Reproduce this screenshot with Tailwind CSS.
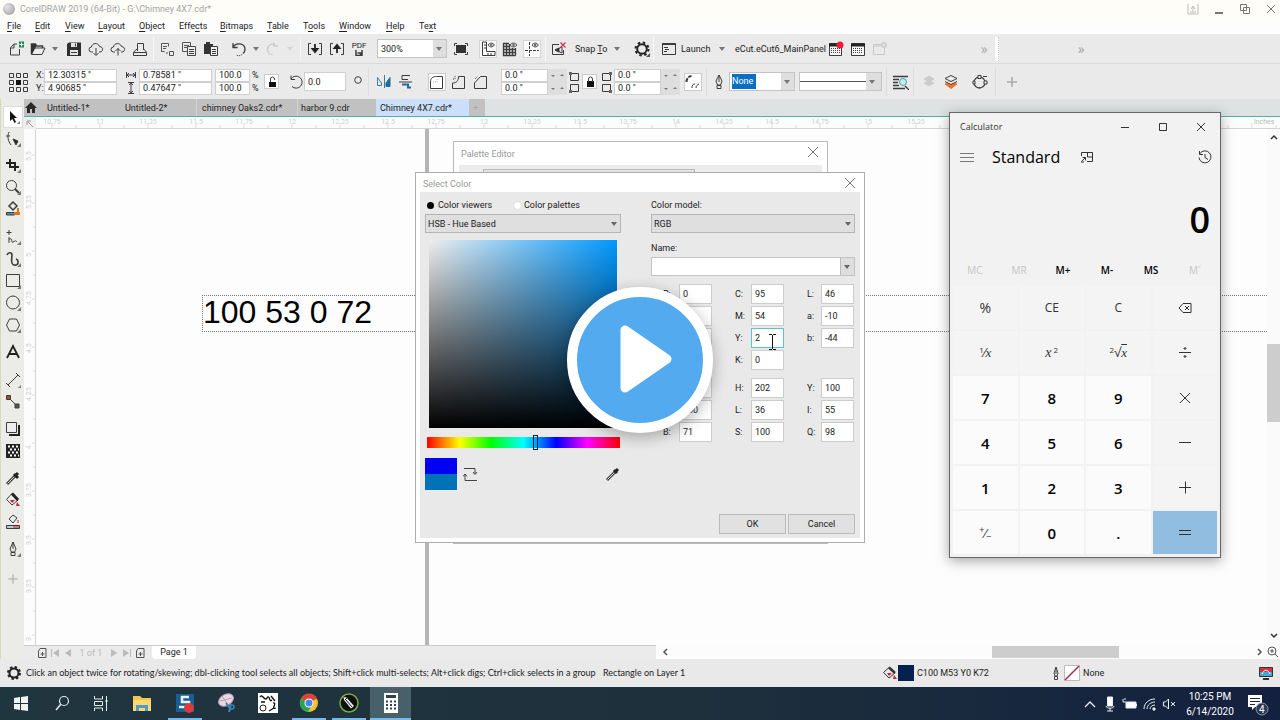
<!DOCTYPE html>
<html lang="en">

<head>
    <meta charset="UTF-8">
    <meta name="viewport" content="width=device-width, initial-scale=1.0">
    <title>CorelDRAW 2019 (64-Bit) - G:\Chimney 4X7.cdr*</title>
    <script src="https://cdn.jsdelivr.net/npm/@tailwindcss/browser@4"></script>
</head>

<body class="relative flex flex-col h-screen overflow-hidden whitespace-nowrap bg-[#e9e9e9] font-['Roboto','Noto_Sans',sans-serif] text-[9px] leading-3 text-[#222]">

    <!-- TITLE BAR -->
    <header class="flex h-[18px] items-center gap-[5px] bg-[#fefdf8] px-[3px] text-[#a3a3a3]">
        <span class="size-3 rounded-full bg-radial-[at_35%_35%] from-[#e4e4e4] to-[#989898]"></span>
        <h1 class="flex-1">CorelDRAW 2019 (64-Bit) - G:\Chimney 4X7.cdr*</h1>
        <div class="flex items-center gap-[14px] [&_svg]:size-3 [&_svg]:fill-none [&_svg]:stroke-[#777]">
            <button aria-label="Account"><svg viewBox="0 0 12 12"><path d="M1 1v10h10V1M3 9h6M6 8V4M4 6l2-3 2 3" stroke="#bbb"/></svg></button>
            <button aria-label="Minimize"><svg viewBox="0 0 12 12"><path d="M2 10h8" stroke-width="2"/></svg></button>
            <button aria-label="Restore"><svg viewBox="0 0 12 12"><path d="M1.500 1.500h6v6h-6zM4.500 4.500h6v6h-6z"/></svg></button>
            <button aria-label="Close"><svg viewBox="0 0 12 12"><path d="M2 2l8 8M10 2l-8 8"/></svg></button>
        </div>
    </header>

    <!-- MENU -->
    <nav class="flex h-4 items-center gap-[15px] bg-[#fdfdfd] px-[7px] [&_u]:underline-offset-2">
        <a href="#" class="w-[13px]"><u>F</u>ile</a>
        <a href="#" class="w-[15px]"><u>E</u>dit</a>
        <a href="#" class="w-[18px]"><u>V</u>iew</a>
        <a href="#" class="w-[26px]"><u>L</u>ayout</a>
        <a href="#" class="w-[25px]"><u>O</u>bject</a>
        <a href="#" class="w-[26px]">Effe<u>c</u>ts</a>
        <a href="#" class="w-[32px]"><u>B</u>itmaps</a>
        <a href="#" class="w-[21px]"><u>T</u>able</a>
        <a href="#" class="w-[21px]">T<u>o</u>ols</a>
        <a href="#" class="w-[32px]"><u>W</u>indow</a>
        <a href="#" class="w-[18px]"><u>H</u>elp</a>
        <a href="#">Te<u>x</u>t</a>
    </nav>

    <!-- STANDARD TOOLBAR -->
    <div class="flex h-[30px] shrink-0 items-center border-b border-[#d9d9d9] bg-[#eaeaea] pl-[5px] [&_button_svg]:mx-auto [&_svg]:shrink-0 [&_svg]:fill-none [&_svg]:stroke-[#3c3c3c] [&>*]:shrink-0 [&>button]:min-w-[22px]">
        <button aria-label="New"><svg class="size-4" viewBox="0 0 16 16"><path d="M9 3H6L2.500 6.500V14h9V8M6 3v4H3"/><path d="M11 .5h5v6h-5z" fill="#178a55" stroke="none"/><path d="M13.500 1.500v4M11.500 3.500h4" stroke="#fff"/></svg></button>
        <button aria-label="Open"><svg class="size-4" viewBox="0 0 16 16"><path d="M1.500 13V3h4l1 2h6v2" stroke-width="1.500"/><path d="M1.500 13.500L4 7h11l-3 6.500z" fill="#eee"/><path d="M1 3h5v3L2 13H1z" fill="#333" stroke="none"/></svg></button>
        <svg class="w-3 h-2" viewBox="0 0 12 8"><path d="M3 2h6L6 6z" fill="#777" stroke="none"/></svg>
        <button aria-label="Save" class="ml-0.5"><svg class="size-4" viewBox="0 0 16 16"><path d="M1 3l2-1.500h12V15H1z" fill="#2f2f2f" stroke="none"/><path d="M5 2h6v4H5zM4 9h8v5H4z" fill="#e5e5e5" stroke="none"/><path d="M9.500 2.500v3M5 11.500h6"/></svg></button>
        <button aria-label="Download from cloud"><svg class="size-4" viewBox="0 0 16 16"><path d="M5 11H3.500a2.500 2.500 0 010-5C4 2 10 1 11.500 5.500c4 0 4 5.500.5 5.500h-1M8 7v7M5.500 12L8 14.500l2.500-2.500"/></svg></button>
        <button aria-label="Upload to cloud"><svg class="size-4" viewBox="0 0 16 16"><path d="M5 11H3.500a2.500 2.500 0 010-5C4 2 10 1 11.500 5.500c4 0 4 5.500.5 5.500h-1M8 14.500v-7M5.500 10L8 7.500l2.500 2.500"/></svg></button>
        <button aria-label="Print"><svg class="size-4" viewBox="0 0 16 16"><path d="M5.500 10V2.500h6V9M1.500 11.500h13v3h-13zM1.500 11.500L4 8.500h2M11.500 8.500h1l2 3"/></svg></button>
        <span class="mx-0.5 h-6 w-px bg-[#f8f8f8]"></span>
        <button aria-label="Cut"><svg class="size-4" viewBox="0 0 16 16"><path d="M2.500 2.500h7v3M2.500 2.500v8h3M4 5.500h4M4 7.500h3M10.500 10.500h4v4h-4z" stroke="#555"/><path d="M7 12h2" stroke="#555"/></svg></button>
        <button aria-label="Copy"><svg class="size-4" viewBox="0 0 16 16"><path d="M1.500 1.500h8v9h-8zM3 4.500h5M3 6.500h3" stroke="#555"/><path d="M6.500 5.500h8v9h-8z" fill="#eee" stroke="#444"/><path d="M8 8.500h5M8 10.500h5M8 12.500h5"/></svg></button>
        <button aria-label="Paste"><svg class="size-4" viewBox="0 0 16 16"><path d="M1 3h2V1h4v2h3v10H1z" fill="#333" stroke="none"/><path d="M7.500 5.500h7v9h-7z" fill="#eee"/><path d="M9 8.500h4M9 10.500h4M9 12.500h4"/></svg></button>
        <button aria-label="Undo" class="ml-1.5"><svg class="size-4" viewBox="0 0 16 16"><path d="M2 6c3-5 12-4 12 2.500 0 1.500-1 3-2 4M2 2v4.500h4.500" stroke-width="1.300"/><path d="M11 13.500c-2 1.500-4 1.500-6 .5" stroke-dasharray="1 1"/></svg></button>
        <svg class="w-3 h-2" viewBox="0 0 12 8"><path d="M3 2h6L6 6z" fill="#777" stroke="none"/></svg>
        <button aria-label="Redo"><svg class="size-4" viewBox="0 0 16 16"><path d="M10 4C6 2 2 5 2.500 9c.5 3 3 4.500 5 4.500M9 1.500V5h4" stroke="#ccc" stroke-width="1.500"/></svg></button>
        <svg class="w-3 h-2" viewBox="0 0 12 8"><path d="M3 2h6L6 6z" fill="#d5d5d5" stroke="none"/></svg>
        <span class="ml-1 mr-[3px] h-6 w-px bg-[#f4f4f4]"></span>
        <button aria-label="Import"><svg class="size-4" viewBox="0 0 16 16"><path d="M4 2.500H1.500v11H4M12 2.500h2.500v11H12"/><path d="M8 3v7M5.500 8L8 11l2.500-3z" stroke-width="1.800" stroke="#222"/></svg></button>
        <button aria-label="Export"><svg class="size-4" viewBox="0 0 16 16"><path d="M4 2.500H1.500v11H4M12 2.500h2.500v11H12"/><path d="M8 12V5M5.500 7L8 4l2.500 3z" stroke-width="1.800" stroke="#222"/></svg></button>
        <button aria-label="Publish to PDF" class="text-[8px] leading-[8px]">PDF<svg class="w-2 h-1.5" viewBox="0 0 8 6"><path d="M1 0v5.500h6V0M2.500 3h3v2.500" stroke-width="1.500"/></svg></button>
        <div class="ml-[7px] flex h-[19px] w-[70px] border border-[#c4c4c4] bg-white">
            <select aria-label="Zoom level" class="min-w-0 flex-1 appearance-none pl-[3px]"><option>300%</option></select>
            <span class="flex w-[13px] items-center bg-[#dedede]"><svg class="w-3 h-2" viewBox="0 0 12 8"><path d="M3 2h6L6 6z" fill="#777" stroke="none"/></svg></span>
        </div>
        <button aria-label="Full screen" class="ml-[3px]"><svg class="size-4" viewBox="0 0 16 16"><path d="M3 4h10v8H3z" fill="#333" stroke="none"/><path d="M1.500 5V2.500H4M12 2.500h2.500V5M14.500 11v2.500H12M4 13.500H1.500V11"/></svg></button>
        <button aria-label="Rulers" class="ml-[5px]"><svg class="size-[18px] border border-[#d5d5d5] bg-[#fafafa]" viewBox="0 0 16 16"><path d="M2.500 1v13.500H15v-4H6.500V1zM4 4h2M4 7h2M8 12v2M11 12v2"/><path d="M8 4c2-2.500 4.500-2.500 6.500 0-2 2.500-4.500 2.500-6.500 0z"/><circle cx="11.250" cy="4" r=".8"/></svg></button>
        <button aria-label="Grid"><svg class="size-4" viewBox="0 0 16 16"><path d="M1.500 2v12.500h12M4.500 2v12.500M7.500 3v11.500M10.500 7v7.500M13.500 7v7.500M1 2.500h6M1 5.500h7M1 8.500h13M1 11.500h13" stroke-width="1.300"/><path d="M8 4c2-2.500 5-2.500 7 0-2 2.500-5 2.500-7 0z" fill="#eee"/><circle cx="11.500" cy="4" r=".8"/></svg></button>
        <button aria-label="Guidelines"><svg class="size-[18px] border border-[#d5d5d5] bg-[#fafafa]" viewBox="0 0 16 16"><path d="M5.500 1v14M1 9.500h14" stroke-dasharray="3 1"/><path d="M8 4c2-2.500 4.500-2.500 6.500 0-2 2.500-4.500 2.500-6.500 0z"/><circle cx="11.250" cy="4" r=".8"/></svg></button>
        <span class="mx-0.5 h-6 w-px bg-[#f8f8f8]"></span>
        <button aria-label="Snap off"><svg class="size-4" viewBox="0 0 16 16"><path d="M8 3.500H1.500v10h11V9M4 9l7-3v6z"/><path d="M4 9l4-2v4z" fill="#333"/><path d="M9.500 1.500l5 5M14.500 1.500l-5 5" stroke="#cf3448" stroke-width="1.200"/></svg></button>
        <button class="ml-[5px] w-9 text-left">Snap <u>T</u>o</button>
        <svg class="w-3 h-2" viewBox="0 0 12 8"><path d="M3 2h6L6 6z" fill="#777" stroke="none"/></svg>
        <button aria-label="Options" class="ml-2"><svg class="size-4" viewBox="0 0 16 16"><circle cx="8" cy="8" r="4.800" stroke-width="2" stroke="#222"/><circle cx="8" cy="8" r="6.500" stroke-width="2" stroke-dasharray="2.500 2.600" stroke="#222"/><path d="M16 12v4h-4z" fill="#555" stroke="none"/></svg></button>
        <span class="mr-1 h-6 w-px bg-[#f8f8f8]"></span>
        <button aria-label="Application launcher"><svg class="size-4" viewBox="0 0 16 16"><path d="M1.500 2.500h13v11h-13z"/><path d="M1.500 3h13" stroke-width="2"/><path d="M3 6.500h4M4 8.500h4M3 10.500h3"/></svg></button>
        <button class="ml-px w-[35px] text-left">Launch</button>
        <svg class="w-3 h-2" viewBox="0 0 12 8"><path d="M3 2h6L6 6z" fill="#777" stroke="none"/></svg>
        <button class="ml-[7px] w-[90px] text-left">eCut.eCut6_MainPanel</button>
        <button aria-label="Macro record"><svg class="size-4" viewBox="0 0 16 16"><path d="M1.500 2.500h12v12h-12z" fill="#f5f5f5"/><path d="M1 4h13" stroke-width="3" stroke="#222"/><path d="M3 7.500h10M3 9.500h10M3 11.500h10" stroke-dasharray="1 1" stroke-width="1.200"/><circle cx="12" cy="4" r="3.500" fill="#ee1c3a" stroke="none"/></svg></button>
        <button aria-label="Macro calendar"><svg class="size-4" viewBox="0 0 16 16"><path d="M1.500 2.500h13v12h-13z" fill="#f5f5f5"/><path d="M1 4h14" stroke-width="3" stroke="#222"/><path d="M3 7.500h10M3 9.500h10M3 11.500h10" stroke-dasharray="1 1" stroke-width="1.200"/></svg></button>
        <button aria-label="Macro stop"><svg class="size-4" viewBox="0 0 16 16"><path d="M9 3.500H1.500v10h11V7M1 5h8" stroke="#c8c8c8"/><circle cx="12" cy="4" r="2.500" stroke="#c8c8c8" fill="#ddd"/></svg></button>
        <button aria-label="More" class="ml-[82px] text-[15px] text-[#aaa]">»</button>
        <span class="h-6 w-1 border-r border-dotted border-[#ccc] bg-white"></span>
        <button aria-label="More tools" class="ml-[71px] text-[15px] text-[#aaa]">»</button>
    </div>

    <!-- PROPERTY BAR -->
    <div class="flex h-[35px] shrink-0 items-center bg-[#eaeaea] pl-[8px] [&_button_svg]:mx-auto [&_svg]:shrink-0 [&_svg]:fill-none [&_svg]:stroke-[#3c3c3c] [&>*]:shrink-0 [&_input]:min-w-0 [&_input]:bg-white [&_input]:px-[3px] [&_input]:h-[13px] [&_input]:border [&_input]:border-[#cfcfcf]">
        <svg class="size-5" viewBox="0 0 20 20"><path d="M1.500 1.500h4v4h-4zM8.500 1.500h4v4h-4zM15.500 1.500h4v4h-4zM1.500 8.500h4v4h-4zM15.500 8.500h4v4h-4zM1.500 15.500h4v4h-4zM8.500 15.500h4v4h-4zM15.500 15.500h4v4h-4z"/><path d="M8 8h5v5H8z" fill="#111" stroke="none"/></svg>
        <div class="ml-2 grid grid-cols-[8px_73px]">
            <label for="px">X:</label><input id="px" value='12.30315 "'>
            <label for="py">Y:</label><input id="py" value='4.90685 "'>
        </div>
        <div class="ml-[9px] grid grid-cols-[13px_73px] items-center">
            <svg class="w-2.5 h-2" viewBox="0 0 10 8"><path d="M.5 1v6M9.500 1v6M1 4h8M3 2L1 4l2 2M7 2l2 2-2 2"/></svg><input aria-label="Width" value='0.78581 "'>
            <svg class="w-2.5 h-3" viewBox="0 0 10 12"><path d="M2 .5h6M2 11.500h6M5 1v10M3 3l2-2 2 2M3 9l2 2 2-2"/></svg><input aria-label="Height" value='0.47647 "'>
        </div>
        <div class="ml-[3px] grid grid-cols-[35px_10px] gap-x-0.5">
            <input id="sx" value="100.0"><label for="sx">%</label>
            <input id="sy" value="100.0"><label for="sy">%</label>
        </div>
        <button aria-label="Lock ratio" class="ml-0.5 size-[15px] border border-[#ccc] bg-white"><svg class="size-3" viewBox="0 0 12 12"><path d="M3 6h7v5H3z" fill="#111" stroke="none"/><path d="M4.500 6V3a2 2 0 014 0v1"/></svg></button>
        <svg class="ml-[9px] size-4" viewBox="0 0 16 16"><path d="M3 5a6 6 0 111 7.500M3 1.500V5.500h4"/></svg>
        <div class="flex w-[42px]"><input aria-label="Rotation" class="h-[19px]! w-full" value="0.0"></div>
        <svg class="ml-1.5 size-3" viewBox="0 0 12 12"><circle cx="6" cy="4" r="3.300"/></svg>
        <span class="ml-1 h-7 w-px bg-[#dedede]"></span>
        <button aria-label="Mirror horizontally" class="ml-1 w-[22px]"><svg class="size-4" viewBox="0 0 16 16"><path d="M1.500 3.500v8h4V9zM8.500 1v13" stroke="#3a7ca5"/><path d="M10 9l4-5.500v9h-4z" fill="#1c6d9a" stroke="#1c6d9a"/></svg></button>
        <button aria-label="Mirror vertically" class="w-[22px]"><svg class="size-4" viewBox="0 0 16 16"><path d="M4 1.500h8M4 1.500v4h6M1 8h13"/><path d="M4 10.500h6v3h3" stroke="#1c6d9a" stroke-width="2"/></svg></button>
        <button aria-label="Round corner" class="ml-[11px] size-[18px] border border-[#ccc] bg-white"><svg class="size-4" viewBox="0 0 16 16"><path d="M1.500 14.500V8c0-4 2.500-5.500 6-5.500h6v12z"/><path d="M4 8h4V4" stroke="#bbb" stroke-dasharray="1 1"/></svg></button>
        <button aria-label="Scalloped corner" class="w-[22px] ml-0.5"><svg class="size-4" viewBox="0 0 16 16"><path d="M1.500 14.500V9c4 0 6-2 6-6.500h6v12z"/><path d="M2 5h2V2" stroke-dasharray="1 1"/></svg></button>
        <button aria-label="Chamfered corner" class="w-[22px]"><svg class="size-4" viewBox="0 0 16 16"><path d="M1.500 14.500V9l6-6.500h6v12z"/><path d="M2 5l3-3" stroke-dasharray="1 1"/></svg></button>
        <div class="ml-[9px] grid grid-cols-[47px_19px]">
            <input aria-label="Top left radius" value='0.0 "'><svg class="w-[19px] h-[13px] bg-[#dedede]" viewBox="0 0 19 13"><path d="M3 6h4L5 8zM12 7h4l-2-2z" fill="#777" stroke="none"/></svg>
            <input aria-label="Bottom left radius" value='0.0 "'><svg class="w-[19px] h-[13px] bg-[#dedede]" viewBox="0 0 19 13"><path d="M3 6h4L5 8zM12 7h4l-2-2z" fill="#777" stroke="none"/></svg>
        </div>
        <svg class="mx-px w-3 h-6" viewBox="0 0 12 24"><path d="M2.500 3.500h8v7h-8zM2.500 14.500h8v7h-8z"/><path d="M1 2h3v3H1zM1 20h3v3H1z" fill="#666" stroke="none"/></svg>
        <button aria-label="Edit corners together" class="ml-px size-[15px] border border-[#ccc] bg-white"><svg class="size-3" viewBox="0 0 12 12"><path d="M3 5h7v6H3z" fill="#111" stroke="none"/><path d="M4.500 6V3a2 2 0 014 0v3"/></svg></button>
        <svg class="ml-1 mr-px w-3 h-6" viewBox="0 0 12 24"><path d="M1.500 3.500h8v7h-8zM1.500 14.500h8v7h-8z"/><path d="M8 2h3v3H8zM8 20h3v3H8z" fill="#666" stroke="none"/></svg>
        <div class="grid grid-cols-[47px_19px]">
            <input aria-label="Top right radius" value='0.0 "'><svg class="w-[19px] h-[13px] bg-[#dedede]" viewBox="0 0 19 13"><path d="M3 6h4L5 8zM12 7h4l-2-2z" fill="#777" stroke="none"/></svg>
            <input aria-label="Bottom right radius" value='0.0 "'><svg class="w-[19px] h-[13px] bg-[#dedede]" viewBox="0 0 19 13"><path d="M3 6h4L5 8zM12 7h4l-2-2z" fill="#777" stroke="none"/></svg>
        </div>
        <button aria-label="Relative corner scaling" class="ml-1 size-[18px] border border-[#ccc] bg-white"><svg class="size-4" viewBox="0 0 16 16"><path d="M1.500 8c0-3 2-6 5-6" stroke-width="2" stroke-dasharray="4 1"/><path d="M7 14c0-3 1-4 3-4M11 14c0-2 1-3 3-4"/></svg></button>
        <span class="ml-1 h-7 w-px bg-[#dedede]"></span>
        <svg class="ml-1 mr-0.5 size-4" viewBox="0 0 16 16"><path d="M8 1v7M8 1L5 7l1.500 4h3L11 7zM6 11.500h4v3H6z"/></svg>
        <div class="flex h-[19px] w-[66px] items-center border border-[#c4c4c4] bg-white">
            <div class="flex-1 pl-0.5"><select aria-label="Outline width" class="h-[15px] w-6 appearance-none bg-[#0a6fc2] leading-[15px] text-white"><option>None</option></select></div>
            <span class="flex h-full w-[13px] items-center bg-[#dedede]"><svg class="w-3 h-2" viewBox="0 0 12 8"><path d="M3 2h6L6 6z" fill="#777" stroke="none"/></svg></span>
        </div>
        <div class="ml-1 flex h-[19px] w-[83px] items-center border border-[#c4c4c4] bg-white">
            <button aria-label="Line style" class="h-px flex-1 bg-[#555]"></button>
            <span class="flex h-full w-[15px] items-center bg-[#dedede]"><svg class="w-3 h-2" viewBox="0 0 12 8"><path d="M3 2h6L6 6z" fill="#777" stroke="none"/></svg></span>
        </div>
        <span class="ml-1 h-7 w-px bg-[#dcdcdc]"></span>
        <button aria-label="Wrap text" class="ml-1 w-[20px]"><svg class="size-4" viewBox="0 0 16 16"><path d="M0 2.500h15M0 5.500h6M0 8.500h5M0 11.500h6M0 14.500h12M12 12l4 4" stroke-width="1.400"/><circle cx="10" cy="8" r="3.500" fill="#c8ecec" stroke="#42a5a5"/></svg></button>
        <span class="ml-0.5 h-7 w-px bg-[#dcdcdc]"></span>
        <button aria-label="To front" class="ml-1 w-[22px]"><svg class="size-4" viewBox="0 0 16 16"><path d="M3 5l5-3 5 3-5 3zM3 9l5 3 5-3-5-2z" fill="#ccc" stroke="#ccc"/></svg></button>
        <button aria-label="To back" class="w-[22px]"><svg class="size-4" viewBox="0 0 16 16"><path d="M2 10l6 4.500 6-4.500-6-3z" fill="#ee7722" stroke="#ee7722"/><path d="M2 4.500L8 1.500l6 3-6 3zM2 7.500l6 3 6-3" fill="#eee"/></svg></button>
        <button aria-label="Convert to curves" class="ml-1.5 w-[23px]"><svg class="size-4" viewBox="0 0 16 16"><circle cx="7.500" cy="8.500" r="5.500" stroke-width="1.300"/><path d="M6 1.500h3v3H6zM12 7h3v3h-3zM1 7h2v3H1zM11 2.500h4" fill="#eee"/></svg></button>
        <span class="ml-1 h-7 w-px bg-[#dcdcdc]"></span>
        <button aria-label="Customize" class="ml-2.5 w-3"><svg class="size-3" viewBox="0 0 12 12"><path d="M6 1v10M1 6h10" stroke="#aaa" stroke-width="1.500"/></svg></button>
    </div>

    <!-- WORKSPACE -->
    <main class="flex min-h-0 flex-1">

        <!-- TOOLBOX -->
        <div class="flex w-6 shrink-0 flex-col items-center border-l border-[#d9d9b8] bg-[#ebebe8] pt-[7px] [&_svg]:mx-auto [&_svg]:size-4 [&_svg]:fill-none [&_svg]:stroke-[#3c3c3c] [&>button]:h-[22px] [&>button]:w-5 [&>button]:shrink-0">
            <button aria-label="Pick" class="border border-[#ddd] bg-white"><svg viewBox="0 0 16 16"><path d="M5 2v10l2.500-2 2 4 1.500-1-2-4h3z" fill="#111" stroke="none"/><path d="M15 12v3h-3z" fill="#777" stroke="none"/></svg></button>
            <button aria-label="Shape"><svg viewBox="0 0 16 16"><path d="M4 1C2 5 3 10 6 14M1 5h4"/><path d="M8 8l5 2-2 4z" fill="#222"/><path d="M16 12v4h-4z" fill="#777" stroke="none"/></svg></button>
            <button aria-label="Crop" class="mt-1"><svg viewBox="0 0 16 16"><path d="M5 2v8h9M1 6h9v8" stroke-width="2" stroke="#222"/><path d="M16 12v4h-4z" fill="#777" stroke="none"/></svg></button>
            <button aria-label="Zoom"><svg viewBox="0 0 16 16"><circle cx="6.500" cy="6.500" r="5"/><path d="M10 10l4 4" stroke-width="2"/><path d="M16 12v4h-4z" fill="#777" stroke="none"/></svg></button>
            <button aria-label="Smart fill"><svg viewBox="0 0 16 16"><path d="M8 1l4 4-4 4-4-4z" stroke-width="1.500"/><path d="M1.500 11.500h8V14h-8z" fill="#5590b5"/><path d="M9 11h6v3H9zM12 7h2v4h-2z" fill="#d9741f" stroke="none"/></svg></button>
            <button aria-label="Freehand" class="mt-1.5"><svg viewBox="0 0 16 16"><path d="M4 1v5M1.500 3.500h5M4 8v6M4 10c5-1 1 4 4 3s2-2 4 0"/><path d="M16 12v4h-4z" fill="#777" stroke="none"/></svg></button>
            <button aria-label="Artistic media"><svg viewBox="0 0 16 16"><path d="M2 4c1-3 5-3 5 0 0 4-2 9 2 10 5 1 5-5 2-6" stroke-width="1.600"/><path d="M16 12v4h-4z" fill="#777" stroke="none"/></svg></button>
            <button aria-label="Rectangle"><svg viewBox="0 0 16 16"><path d="M1.500 1.500h13v12h-13z"/><path d="M16 12v4h-4z" fill="#777" stroke="none"/></svg></button>
            <button aria-label="Ellipse"><svg viewBox="0 0 16 16"><circle cx="8" cy="7.500" r="6.500"/><path d="M16 12v4h-4z" fill="#777" stroke="none"/></svg></button>
            <button aria-label="Polygon"><svg viewBox="0 0 16 16"><path d="M4.500 2h7l3 6-3 6h-7l-3-6z"/><path d="M16 12v4h-4z" fill="#777" stroke="none"/></svg></button>
            <button aria-label="Text" class="mt-[5px]"><svg viewBox="0 0 16 16"><path d="M2 14L8 2l6 12M4 10h8" stroke-width="1.800" stroke="#222"/></svg></button>
            <button aria-label="Dimension" class="mt-1.5"><svg viewBox="0 0 16 16"><path d="M3 13L13 3M1 11l4 4M11 1l4 4"/><path d="M16 13v3h-3z" fill="#777" stroke="none"/></svg></button>
            <button aria-label="Connector"><svg viewBox="0 0 16 16"><path d="M3 3l9 9"/><path d="M1.500 1.500h4v4h-4z" fill="#a54a33"/><path d="M10 10h4v4h-4z" fill="#555"/></svg></button>
            <button aria-label="Drop shadow" class="mt-[5px]"><svg viewBox="0 0 16 16"><path d="M4 14h10V4" stroke="#222" stroke-width="2"/><path d="M1.500 1.500h10v10h-10z" fill="#eee"/></svg></button>
            <button aria-label="Transparency"><svg viewBox="0 0 16 16"><path d="M1 1h14v14H1z" fill="#222" stroke="none"/><path d="M3 3.500h11M5 6.500h9M3 9.500h11M5 12.500h9" stroke="#fff" stroke-width="2" stroke-dasharray="2 2"/></svg></button>
            <button aria-label="Color eyedropper" class="mt-[5px]"><svg viewBox="0 0 16 16"><path d="M2 14l8-8" stroke-width="3"/><path d="M2.500 13.500l7-7" stroke="#ddd"/><path d="M9 4l4 4M10 6l3-3" stroke-width="3" stroke="#222"/></svg></button>
            <button aria-label="Interactive fill"><svg viewBox="0 0 16 16"><path d="M7 1.500L13 8l-6 5-5.500-5.500z"/><path d="M7 1.500L13 8" stroke-width="3" stroke="#222"/><path d="M5 8h5l-3 3zM12 10l3 4h-4z" fill="#c62344" stroke="none"/></svg></button>
            <button aria-label="Smart drawing"><svg viewBox="0 0 16 16"><path d="M8 1l4 3-4 5-4-4z"/><path d="M13 6v3" stroke="#c62344"/><path d="M1.500 11.500h13v3h-13z" fill="#c77"/><path d="M2 12h6v2H2z" fill="#b9c9d4" stroke="none"/></svg></button>
            <button aria-label="Outline pen" class="mt-[5px]"><svg viewBox="0 0 16 16"><path d="M8 1v7M8 1L5 8l1.500 3h3L11 8zM6 11.500h4v3H6z"/><path d="M16 12v4h-4z" fill="#777" stroke="none"/></svg></button>
            <button aria-label="Customize toolbox" class="mt-2"><svg viewBox="0 0 16 16"><path d="M8 3.500v9M3.500 8h9" stroke="#bbb" stroke-width="1.500"/></svg></button>
        </div>

        <div class="flex min-w-0 flex-1 flex-col">
            <!-- DOCUMENT TABS -->
            <div class="flex h-[18px] shrink-0 items-center border-b border-[#4db3a8] bg-[#dfe2e2] [&>a]:h-full [&>a]:bg-[#c1c1c1] [&>a]:pt-[3px]">
                <a href="#" aria-label="Welcome" class="w-5 pl-px"><svg class="size-3" viewBox="0 0 12 12"><path d="M6 0L0 6h2v5h3V7h2v4h3V6h2z" fill="#2a2a2a"/></svg></a>
                <a href="#" class="w-[76px] pl-[3px]">Untitled-1*</a>
                <a href="#" class="w-[77px] border-r border-[#d3d3d3] pl-[5px]">Untitled-2*</a>
                <a href="#" class="w-[101px] border-r border-[#d3d3d3] pl-[5px]">chimney Oaks2.cdr*</a>
                <a href="#" class="w-[78px] pl-[3px]">harbor 9.cdr</a>
                <a href="#" class="w-[93px] bg-[#cbdffa]! pl-1">Chimney 4X7.cdr*</a>
                <a href="#" aria-label="New tab" class="w-[16px] pl-1 text-[#aaa]">+</a>
            </div>

            <!-- HORIZONTAL RULER -->
            <div class="flex h-3 shrink-0 border-b border-[#d4d4d4] bg-[#fcfcfc]">
                <svg class="w-3 h-3 bg-[#eee]" viewBox="0 0 12 12"><path d="M3 8V4h4M4 5l5 5" fill="none" stroke="#999"/></svg>
                <svg id="hruler" class="h-full min-w-0 flex-1" aria-hidden="true"></svg>
            </div>

            <div class="flex min-h-0 flex-1">
                <svg id="vruler" class="w-3 h-full shrink-0 border-r border-[#d4d4d4] bg-[#fcfcfc]" aria-hidden="true"></svg>

                <!-- CANVAS -->
                <div class="relative min-w-0 flex-1 overflow-hidden bg-[#fdfdfd]">
                    <div class="absolute inset-y-0 left-[389px] w-1 bg-[#b5b5b5]"></div>
                    <div class="absolute left-[166px] right-0 top-[166px] flex h-[37px] items-center border border-r-0 border-dotted border-[#777] pb-1 font-['Liberation_Sans',sans-serif] text-[32px] leading-8 text-black">100 53 0 72</div>
                </div>
                <div class="flex w-[13px] shrink-0 flex-col items-center bg-[#fafafa] py-[5px]">
                    <svg class="size-2" viewBox="0 0 8 8"><path d="M1 5l3-3 3 3" fill="none" stroke="#333" stroke-width="1.500"/></svg>
                    <div class="mt-[202px] mb-auto h-[78px] w-full bg-[#cdcdcd]"></div>
                    <svg class="size-2" viewBox="0 0 8 8"><path d="M1 2l3 3 3-3" fill="none" stroke="#333" stroke-width="1.500"/></svg>
                </div>
            </div>

            <!-- PAGE NAVIGATOR -->
            <div class="flex h-[14px] shrink-0 items-center bg-[#fcfcfc] [&_svg]:fill-none [&_svg]:stroke-[#555]">
                <div class="flex h-full w-[632px] items-center gap-[3px] border-t border-[#ccc] bg-[#ebebeb] pl-3 text-[#bbb]">
                    <button aria-label="Add page before" class="ml-px"><svg class="size-2.5" viewBox="0 0 10 10"><path d="M3 .5h6v9H1.500V3zM3.500 6h4M5.500 4v4"/></svg></button>
                    <button aria-label="First page"><svg class="size-2.5" viewBox="0 0 10 10"><path d="M1 1v8h1V1zM9 1v8L3 5z" fill="#bbb" stroke="none"/></svg></button>
                    <button aria-label="Previous page"><svg class="size-2.5" viewBox="0 0 10 10"><path d="M8 1v8L2 5z" fill="#bbb" stroke="none"/></svg></button>
                    <span class="w-[30px] text-center">1 of 1</span>
                    <button aria-label="Next page"><svg class="size-2.5" viewBox="0 0 10 10"><path d="M2 1v8l6-4z" fill="#bbb" stroke="none"/></svg></button>
                    <button aria-label="Last page"><svg class="size-2.5" viewBox="0 0 10 10"><path d="M1 1v8l6-4zM8 1v8h1V1z" fill="#bbb" stroke="none"/></svg></button>
                    <button aria-label="Add page after"><svg class="size-2.5" viewBox="0 0 10 10"><path d="M3 .5h6v9H1.500V3zM3.500 6h4M5.500 4v4"/></svg></button>
                    <a href="#" class="ml-1 h-full w-11 rounded-b-sm bg-white text-center leading-[13px] text-[#222]">Page 1</a>
                </div>
                <svg class="ml-1.5 size-2" viewBox="0 0 8 8"><path d="M5 1L2 4l3 3" stroke-width="1.500"/></svg>
                <div class="ml-auto h-3 w-[127px] bg-[#cdcdcd]"></div>
                <svg class="ml-[136px] mr-1 size-2" viewBox="0 0 8 8"><path d="M3 1l3 3-3 3" stroke-width="1.500"/></svg>
                <svg class="mr-px size-3" viewBox="0 0 12 12"><circle cx="5" cy="5" r="4"/><path d="M8 8l3 3M3 5h4M5 3v4"/></svg>
            </div>
        </div>
    </main>

    <!-- STATUS BAR -->
    <footer class="flex h-7 shrink-0 items-center bg-[#e9e9e9] pl-1.5 pr-1.5">
        <svg class="size-4" viewBox="0 0 16 16" fill="none" stroke="#222"><circle cx="8" cy="8" r="4.500" stroke-width="2"/><circle cx="8" cy="8" r="6" stroke-width="2" stroke-dasharray="2.400 2.300"/></svg>
        <p class="ml-1 w-[577px] font-['Lato','Noto_Sans',sans-serif]">Click an object twice for rotating/skewing; dbl-clicking tool selects all objects; Shift+click multi-selects; Alt+click digs; Ctrl+click selects in a group</p>
        <p class="w-[279px] font-['Lato','Noto_Sans',sans-serif]">Rectangle on Layer 1</p>
        <svg class="size-4 shrink-0" viewBox="0 0 16 16" fill="none" stroke="#333"><path d="M7 2.500L13 8l-6 5-5.500-5.500z"/><path d="M7 2.500L13 8" stroke-width="2.500"/><path d="M5 8h5l-3 3zM12 10l3 4h-4z" fill="#c62344" stroke="none"/></svg>
        <span class="size-4 bg-[#06214d]"></span>
        <p class="ml-[3px] w-[131px]">C100 M53 Y0 K72</p>
        <svg class="size-4 shrink-0" viewBox="0 0 16 16" fill="none" stroke="#444"><path d="M8 2v7M8 2L6 8l1 3h2l1-3zM6.500 11.500h3v3h-3z"/></svg>
        <svg class="size-4 shrink-0" viewBox="0 0 16 16"><path d="M.5.5h15v15H.5z" fill="#fff" stroke="#bbb"/><path d="M1 15L15 1" stroke="#b3233f" stroke-width="1.500"/></svg>
        <p class="ml-[3px]">None</p>
        <svg class="ml-auto size-4" viewBox="0 0 16 16"><path d="M1.500 2.500h13v9h-13z" fill="#3fa9dc" stroke="#333"/><path d="M2 3h12v4H2z" fill="#d8303a"/><path d="M4 9c2-5 6-5 8 0" fill="none" stroke="#fff"/><path d="M5 14h6" stroke="#333" stroke-width="2"/></svg>
    </footer>

    <!-- TASKBAR -->
    <div class="flex h-[33px] shrink-0 items-center bg-linear-to-r from-[#20363f] via-[#1d303c] via-55% to-[#14203f] text-white [&>button]:h-full [&>button]:w-[41px] [&>button]:border-b-2 [&>button]:border-transparent [&>button>svg]:mx-auto [&>button>svg]:size-5">
        <button aria-label="Start"><svg viewBox="0 0 20 20"><path d="M3 5l6-1v6H3zM10 4l7-1v7h-7zM3 11h6v6l-6-1zM10 11h7v7l-7-1z" fill="#eef4f4"/></svg></button>
        <button aria-label="Search"><svg viewBox="0 0 20 20"><circle cx="12" cy="8" r="4.500" fill="none" stroke="#e6ecec" stroke-width="1.200"/><path d="M9 11l-5 6" stroke="#e6ecec" stroke-width="1.500"/></svg></button>
        <button aria-label="Task view" class="w-[38px]!"><svg viewBox="0 0 20 20" fill="none" stroke="#e6ecec"><path d="M3.500 3v3h8V3M3.500 8.500h8v4h-8zM3.500 18v-3h8v3M15.500 3v15M14 8h3"/></svg></button>
        <button aria-label="File Explorer" class="w-[44px]!"><svg viewBox="0 0 20 20"><path d="M1 3h7l2 2h9v13H1z" fill="#f5c64b"/><path d="M1 7h18v11H1z" fill="#fbd96f"/><path d="M4 18v-6h12v6h-3v-3H7v3z" fill="#4e9bd4"/></svg></button>
        <button aria-label="Recorder" class="mx-1 w-[34px]! border-[#76b9ed]!"><svg viewBox="0 0 20 20"><path d="M1 1h18v18H1z" fill="#176091"/><path d="M14 4H7v5h7v5H4" fill="none" stroke="#e8f2f8" stroke-width="2.500"/><circle cx="14" cy="15" r="5" fill="#dd3b3b"/></svg></button>
        <button aria-label="Snipping Tool"><svg viewBox="0 0 20 20"><ellipse cx="9" cy="7" rx="8" ry="5.500" fill="#ead9e4" stroke="#b39cb0" transform="rotate(-30 9 7)"/><path d="M5 3l6 9M3 8l12-3" stroke="#c398a8"/><path d="M9 10l5 7M14 11l-2 8" stroke="#3a83b9" stroke-width="2"/><circle cx="15" cy="14" r="2" fill="none" stroke="#3a83b9" stroke-width="1.500"/></svg></button>
        <button aria-label="Drawing app"><svg viewBox="0 0 20 20"><path d="M0 0h20v20H0z" fill="#fff"/><path d="M2 4c3-4 4 5 7 1s2 5 5 2M13 3l4 5M15 10c5-1-3 7 3 5M11 18l5-3M3 9h4" fill="none" stroke="#111" stroke-width="1.300"/><circle cx="5" cy="15" r="3" fill="none" stroke="#222"/></svg></button>
        <button aria-label="Chrome" class="mx-1 w-[34px]! border-[#76b9ed]!"><svg viewBox="0 0 20 20"><circle cx="10" cy="10" r="9" fill="#f2c230"/><path d="M10 10L2 5.500a9 9 0 0116 0z" fill="#db4437"/><path d="M10 10L2 5.500A9 9 0 009 19l4-7z" fill="#2ea353"/><circle cx="10" cy="10" r="4.500" fill="#fff"/><circle cx="10" cy="10" r="3.500" fill="#4285f4"/></svg></button>
        <button aria-label="CorelDRAW" class="ml-0.5 mr-1 w-[34px]! border-[#76b9ed]!"><svg viewBox="0 0 20 20"><circle cx="10" cy="10" r="9" fill="#0d120d" stroke="#79a83c" stroke-width="1.500"/><path d="M4.500 4l3 .5 7.500 8.500-3 2.500-7-8.500z" fill="#eee"/><path d="M6 7l2-2M7 7l6 7" stroke="#222"/></svg></button>
        <button aria-label="Calculator" class="border-[#76b9ed]! bg-[#47606a]"><svg viewBox="0 0 20 20"><path d="M3 0h14v20H3z" fill="#fff"/><path d="M5 2h10v3H5z" fill="#31434d"/><path d="M5 8.500h11M5 12h11M5 15.500h11" stroke="#31434d" stroke-width="2" stroke-dasharray="2 2"/></svg></button>
        <div class="ml-auto flex items-center gap-1 pr-[10px] [&_svg]:fill-none [&_svg]:stroke-[#e8eef2]">
            <svg class="size-4" viewBox="0 0 16 16"><path d="M3 11l5-5 5 5" stroke-width="1.300"/></svg>
            <svg class="size-4" viewBox="0 0 16 16"><path d="M5.500 1h5v9h-5z" fill="#fff"/><path d="M4 10c0 3 8 3 8 0M8 12v3M5 15h6"/></svg>
            <svg class="size-4" viewBox="0 0 16 16"><path d="M4 6h10v6H4z" fill="#fff"/><path d="M1 3v3h3M3 2v2M14.500 8v2"/></svg>
            <svg class="size-4" viewBox="0 0 16 16"><path d="M2 13C2 7 7 3 13 3M5 13c0-4 4-7 8-7M8 13c0-2 2-4 5-4"/><circle cx="12" cy="13" r="1.200" fill="#fff"/></svg>
            <svg class="size-4" viewBox="0 0 16 16"><path d="M1.500 6v4h2l3 3V3l-3 3zM9 6l4 4M13 6l-4 4"/></svg>
            <time class="ml-1 mr-1 w-12 text-center text-[10px] leading-[15px]">10:25 PM<br>6/14/2020</time>
            <svg class="ml-1 w-6 h-6" viewBox="0 0 24 24"><path d="M2 3h14v12H9l-3 3v-3H2z" fill="#fff" stroke="none"/><path d="M4 6.500h10M4 9.500h10M4 12.500h5" stroke="#1b2a45"/><circle cx="16" cy="17" r="6" fill="#2b3955" stroke="#8793a5"/><text x="13" y="21" font-size="10" fill="#fff" stroke="none">4</text></svg>
        </div>
    </div>

    <!-- PALETTE EDITOR (behind) -->
    <section class="absolute left-[453px] top-[141px] h-[403px] w-[375px] border border-[#bbb] bg-white px-[5px]">
        <div class="flex h-[23px] items-center justify-between pl-0.5 text-[#999]">
            <h2>Palette Editor</h2>
            <button aria-label="Close palette editor" class="mr-[3px] mb-1"><svg class="size-3" viewBox="0 0 12 12" fill="none" stroke="#777"><path d="M1 1l10 10M11 1L1 11"/></svg></button>
        </div>
        <div class="h-[373px] bg-[#ececec] pl-6 pt-1"><div class="h-5 w-[212px] border border-[#bbb] bg-[#e2e2e2]"></div></div>
    </section>

    <!-- SELECT COLOR -->
    <section class="absolute left-[415px] top-[172px] w-[450px] border border-[#adadad] bg-white px-1 pb-1">
        <div class="flex h-[19px] items-center justify-between pl-[3px] pr-1 text-[#999]">
            <h2 class="pt-0.5">Select Color</h2>
            <button aria-label="Close"><svg class="size-3" viewBox="0 0 12 12" fill="none" stroke="#777"><path d="M1 1l10 10M11 1L1 11"/></svg></button>
        </div>
        <div class="flex h-[346px] justify-between bg-[#e9e9e9] pl-[5px] pr-[5px] pt-[7px]">
            <div class="w-[196px]">
                <div class="flex h-3 items-center">
                    <label class="flex w-[86px] items-center gap-0.5"><input type="radio" name="view" checked class="mx-0.5 size-[7px] appearance-none rounded-full bg-white checked:bg-black">Color viewers</label>
                    <label class="flex items-center"><input type="radio" name="view" class="mx-0.5 size-[9px] appearance-none rounded-full border border-[#ddd] bg-white checked:bg-black">Color palettes</label>
                </div>
                <div class="mt-[3px] flex h-[19px] items-center border border-[#b5b5b5] bg-[#dfdfdf]">
                    <select aria-label="Color viewer" class="flex-1 appearance-none pl-0.5"><option>HSB - Hue Based</option></select>
                    <svg class="w-3 h-2" viewBox="0 0 12 8"><path d="M3 2h6L6 6z" fill="#666"/></svg>
                </div>
                <div class="ml-1 mt-[7px] h-[188px] w-[188px] bg-[#0098ff]">
                    <div class="size-full bg-linear-to-r from-[#eee] to-transparent">
                        <div class="size-full bg-linear-to-b from-transparent to-black"></div>
                    </div>
                </div>
                <div class="ml-0.5 mt-[9px] h-[11px] w-[193px] bg-[linear-gradient(90deg,#f00,#ff0_17%,#0f0_33%,#0ff_50%,#00f_67%,#f0f_83%,#f00)]">
                    <div class="relative left-[106px] -top-0.5 h-[15px] w-[5px] border border-[#123]"></div>
                </div>
                <div class="mt-2.5 flex items-center">
                    <div class="w-8 [&>div]:h-4"><div class="bg-[#0000f5]"></div><div class="bg-[#0272b6]"></div></div>
                    <button aria-label="Swap colors" class="ml-1.5"><svg class="size-4" viewBox="0 0 16 16" fill="none" stroke="#444"><path d="M1 2.500h11V8M10 6l2 2.500L14 6M14 14.500H2V8M0 10.500L2 8l2 2.500"/></svg></button>
                    <button aria-label="Pick color" class="ml-auto"><svg class="size-4" viewBox="0 0 16 16" fill="none" stroke="#444"><path d="M2 14l8-8" stroke-width="3"/><path d="M2.500 13.500l7-7" stroke="#ddd"/><path d="M9 4l3 3M10 6l3-3" stroke-width="3" stroke="#222"/></svg></button>
                </div>
            </div>

            <div class="flex w-[204px] flex-col">
                <label for="model">Color model:</label>
                <div class="mt-[3px] flex h-[19px] items-center border border-[#b5b5b5] bg-[#dfdfdf]">
                    <select id="model" class="flex-1 appearance-none pl-0.5"><option>RGB</option></select>
                    <svg class="w-3 h-2" viewBox="0 0 12 8"><path d="M3 2h6L6 6z" fill="#666"/></svg>
                </div>
                <label for="cname" class="mt-[9px]">Name:</label>
                <div class="mt-[3px] flex h-[19px] items-center border border-[#c2c2c2] bg-white">
                    <input id="cname" class="h-full min-w-0 flex-1 px-1">
                    <span class="flex h-full w-[14px] items-center border-l border-[#bbb] bg-[#dedede]"><svg class="w-3 h-2" viewBox="0 0 12 8"><path d="M3 2h6L6 6z" fill="#666"/></svg></span>
                </div>
                <div class="mt-2 grid grid-cols-[16px_56px_16px_56px_14px_33px] items-center justify-end gap-y-0.5 pr-px [&_input]:h-5 [&_input]:w-[33px] [&_input]:border [&_input]:border-[#ccc] [&_input]:bg-white [&_input]:px-[3px]">
                    <label for="r">R:</label><input id="r" value="0"><label for="c">C:</label><input id="c" value="95"><label for="l">L:</label><input id="l" value="46">
                    <label for="g">G:</label><input id="g"><label for="m">M:</label><input id="m" value="54"><label for="a">a:</label><input id="a" value="-10">
                    <label for="b">B:</label><input id="b"><label for="y">Y:</label><input id="y" class="border-[#5cc4c4]!" value="2"><label for="lb">b:</label><input id="lb" value="-44">
                    <label for="k" class="col-start-3">K:</label><input id="k" value="0">
                </div>
                <div class="mt-2 grid grid-cols-[16px_56px_16px_56px_14px_33px] items-center justify-end gap-y-0.5 pr-px [&_input]:h-5 [&_input]:w-[33px] [&_input]:border [&_input]:border-[#ccc] [&_input]:bg-white [&_input]:px-[3px]">
                    <label for="h">H:</label><input id="h"><label for="hh">H:</label><input id="hh" value="202"><label for="yy">Y:</label><input id="yy" value="100">
                    <label for="s">S:</label><input id="s" value="100"><label for="ll">L:</label><input id="ll" value="36"><label for="i">I:</label><input id="i" value="55">
                    <label for="bb">B:</label><input id="bb" value="71"><label for="ss">S:</label><input id="ss" value="100"><label for="q">Q:</label><input id="q" value="98">
                </div>
                <div class="mt-auto mb-1 flex justify-end gap-0.5 [&>button]:h-5 [&>button]:w-[67px] [&>button]:border [&>button]:border-[#bcbcbc] [&>button]:bg-[#e1e1e1]">
                    <button>OK</button>
                    <button>Cancel</button>
                </div>
            </div>
        </div>
    </section>

    <!-- TEXT CURSOR -->
    <svg class="absolute left-[768px] top-[334px] h-4 w-[9px]" viewBox="0 0 9 16" fill="none" stroke="#111"><path d="M1 .5h3M5 .5h3M4.500 1v14M1 15.500h3M5 15.500h3"/></svg>

    <!-- CALCULATOR -->
    <section class="absolute left-[949px] top-[112px] w-[272px] border border-[#666] bg-[#f2f2f2] pb-[3px] font-['Open_Sans','Noto_Sans',sans-serif] text-black shadow-[0_3px_12px_rgba(0,0,0,0.35)]">
        <div class="flex h-7 items-center pl-2.5 pr-3.5 text-[#333] [&_svg]:size-2.5 [&_svg]:fill-none [&_svg]:stroke-[#333]">
            <h2 class="flex-1">Calculator</h2>
            <div class="flex gap-7">
                <button aria-label="Minimize calculator"><svg viewBox="0 0 10 10"><path d="M1 5.500h8"/></svg></button>
                <button aria-label="Maximize calculator"><svg viewBox="0 0 10 10"><path d="M1.500 1.500h7v7h-7z"/></svg></button>
                <button aria-label="Close calculator"><svg viewBox="0 0 10 10"><path d="M1 1l8 8M9 1L1 9"/></svg></button>
            </div>
        </div>
        <div class="flex h-8 items-center pl-2.5 pr-2 [&_svg]:size-3.5 [&_svg]:fill-none [&_svg]:stroke-[#333]">
            <button aria-label="Menu"><svg viewBox="0 0 14 14"><path d="M0 3.500h14M0 7.500h14M0 11.500h14" stroke="#777"/></svg></button>
            <h3 class="ml-[18px] w-[88px] text-base">Standard</h3>
            <button aria-label="Keep on top"><svg viewBox="0 0 14 14"><path d="M1.500 6V2.500h11v9H7M7.500 3v4h5M1.500 11.500l4-4M2.500 7.500h3v3M1 12h3"/></svg></button>
            <button aria-label="History" class="ml-auto"><svg viewBox="0 0 14 14"><path d="M2 3.500a6 6 0 11-1 4M1.500 1v3.500H5M7 4v3.500l3 2"/></svg></button>
        </div>
        <output class="block h-[83px] pr-2.5 pt-[27px] text-right text-[36px] leading-10 font-semibold">0</output>
        <div class="grid h-7 grid-cols-6 px-[3px] text-[10px] font-semibold [&>button:disabled]:font-normal [&>button:disabled]:text-[#c5c5c5]">
            <button disabled>MC</button><button disabled>MR</button><button>M+</button><button>M-</button><button>MS</button><button disabled>M˅</button>
        </div>
        <div class="grid auto-rows-[43px] grid-cols-4 gap-[2px] px-[3px] pt-0.5 text-[15px] [&>button]:bg-[#f4f4f4] [&_svg]:mx-auto [&_svg]:size-4 [&_svg]:fill-none [&_svg]:stroke-[#333]">
            <button class="text-sm text-[#333]">%</button>
            <button class="text-xs text-[#333]">CE</button>
            <button class="text-xs text-[#333]">C</button>
            <button aria-label="Backspace"><svg viewBox="0 0 16 16"><path d="M2 8l4-4.500h8v9H6zM8 6l4 4M12 6l-4 4"/></svg></button>
            <button class="text-[13px] text-[#333]"><sup class="text-[8px]">1</sup>⁄<i class="font-['Liberation_Serif',serif]">x</i></button>
            <button class="text-[14px] text-[#333]"><i class="font-['Liberation_Serif',serif]">x</i><sup class="text-[8px]"> 2</sup></button>
            <button class="text-[13px] text-[#333]"><sup class="text-[8px]">2</sup>√<i class="font-['Liberation_Serif',serif] overline">x</i></button>
            <button aria-label="Divide"><svg viewBox="0 0 16 16"><path d="M2 7.500h12M7 3h2v1H7zM7 11h2v1H7z"/></svg></button>
            <button class="bg-[#fbfbfb]! font-semibold">7</button>
            <button class="bg-[#fbfbfb]! font-semibold">8</button>
            <button class="bg-[#fbfbfb]! font-semibold">9</button>
            <button aria-label="Multiply"><svg viewBox="0 0 16 16"><path d="M3 3l10 10M13 3L3 13"/></svg></button>
            <button class="bg-[#fbfbfb]! font-semibold">4</button>
            <button class="bg-[#fbfbfb]! font-semibold">5</button>
            <button class="bg-[#fbfbfb]! font-semibold">6</button>
            <button aria-label="Minus"><svg viewBox="0 0 16 16"><path d="M2 7.500h12"/></svg></button>
            <button class="bg-[#fbfbfb]! font-semibold">1</button>
            <button class="bg-[#fbfbfb]! font-semibold">2</button>
            <button class="bg-[#fbfbfb]! font-semibold">3</button>
            <button aria-label="Plus"><svg viewBox="0 0 16 16"><path d="M2 7.500h12M8.500 1.500v12"/></svg></button>
            <button class="bg-[#fbfbfb]! text-[13px] text-[#333]"><sup class="text-[9px]">+</sup>⁄<sub class="text-[9px]">−</sub></button>
            <button class="bg-[#fbfbfb]! font-semibold">0</button>
            <button class="bg-[#fbfbfb]! font-semibold">.</button>
            <button aria-label="Equals" class="bg-[#91bde0]!"><svg viewBox="0 0 16 16"><path d="M2 5.500h12M2 9.500h12"/></svg></button>
        </div>
    </section>

    <!-- PLAY BUTTON -->
    <button aria-label="Play video" class="absolute left-1/2 top-1/2 size-[146px] -translate-1/2 rounded-full border-10 border-white bg-[#54aaee] shadow-[0_4px_16px_rgba(0,0,0,0.3)]">
        <svg class="mx-auto size-[126px]" viewBox="0 0 126 126"><path d="M48 33v58l42-29z" fill="#fff" stroke="#fff" stroke-width="9" stroke-linejoin="round"/></svg>
    </button>

    <script>
        // ruler ticks, one label every quarter inch
        const line = (x1, y1, x2, y2) => `<path d="M${x1} ${y1}L${x2} ${y2}" stroke="#ddd"/>`;
        let h = '', v = '';
        for (let i = 0; i < 26; i++) {
            const x = 16 + i * 48;
            h += line(x, 6, x, 11) + line(x + 24, 8, x + 24, 11);
            // the calculator covers this stretch
            if (x < 900) h += `<text x="${x}" y="7" text-anchor="middle" font-size="7" fill="#d0d0d0">${10.75 + i / 4}</text>`;
        }
        h += '<text x="1218" y="7" font-size="7" fill="#bbb">inches</text>';
        for (let i = 0; i < 11; i++) {
            const y = 26 + i * 48;
            v += line(8, y, 11, y) + line(9, y + 24, 11, y + 24);
            v += `<text transform="translate(7 ${y + 6}) rotate(-90)" font-size="7" fill="#d0d0d0">${5.5 - i / 4}</text>`;
        }
        document.getElementById('hruler').innerHTML = h;
        document.getElementById('vruler').innerHTML = v;
    </script>
</body>

</html>
